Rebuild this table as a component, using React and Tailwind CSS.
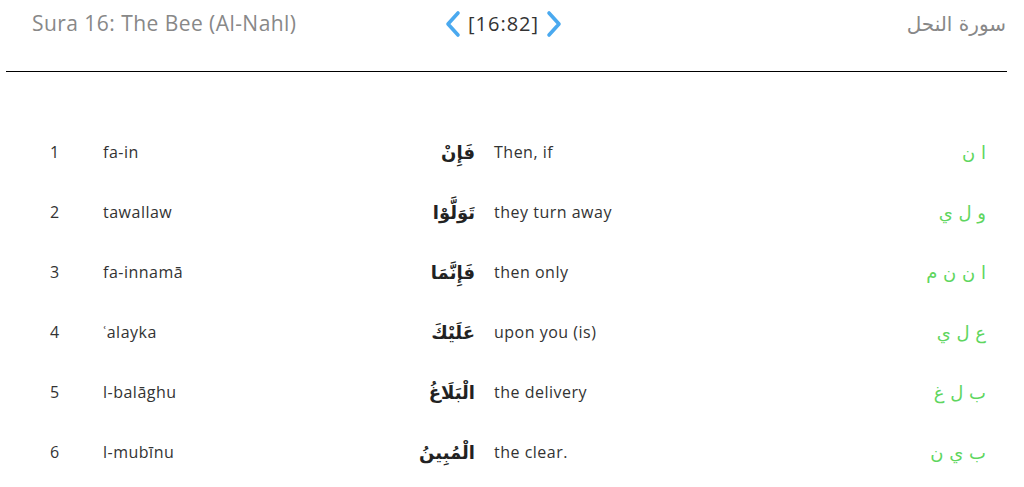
import React from "react";

const rows = [
  ["1", "fa-in", "فَإِنْ", "Then, if", "ا ن"],
  ["2", "tawallaw", "تَوَلَّوْا", "they turn away", "و ل ي"],
  ["3", "fa-innamā", "فَإِنَّمَا", "then only", "ا ن ن م"],
  ["4", "ʿalayka", "عَلَيْكَ", "upon you (is)", "ع ل ي"],
  ["5", "l-balāghu", "الْبَلَاغُ", "the delivery", "ب ل غ"],
  ["6", "l-mubīnu", "الْمُبِينُ", "the clear.", "ب ي ن"],
];

const Chevron = ({ dir }) => (
  <svg width="20" height="30" viewBox="0 0 20 30" fill="none">
    <path
      d={dir === "left" ? "M15 4 L5 15 L15 26" : "M5 4 L15 15 L5 26"}
      stroke="#4aa9ef"
      strokeWidth="3.6"
      strokeLinecap="round"
      strokeLinejoin="round"
    />
  </svg>
);

export default function App() {
  return (
    <div className="w-[1024px] h-[487px] bg-white overflow-hidden" style={{ fontFamily: "'Open Sans', Lato, sans-serif" }}>
      <div className="flex items-center h-[48px]">
        <div className="w-[443px] pl-[32px] text-[21px] text-[#888888] tracking-[0.45px]">Sura 16: The Bee (Al-Nahl)</div>
        <div className="flex items-center gap-[5px]">
          <Chevron dir="left" />
          <span className="text-[20px] text-[#333333] tracking-[1px]">[16:82]</span>
          <Chevron dir="right" />
        </div>
        <div className="flex-1 flex justify-end pr-[18px]">
          <span dir="rtl" className="text-[20px] text-[#888888]" style={{ fontFamily: "'DejaVu Sans', sans-serif" }}>سورة النحل</span>
        </div>
      </div>
      <div className="ml-[6px] mt-[23px] w-[1001px] border-t border-black" />
      <div className="mt-[50px]">
        {rows.map((r) => (
          <div key={r[0]} className="flex items-center h-[60px] text-[16px] text-[#333333] tracking-[0.5px]">
            <div className="w-[103px] pl-[50px]">{r[0]}</div>
            <div className="w-[260px]">{r[1]}</div>
            <div dir="rtl" className="w-[112px] text-right text-[18px] font-bold text-[#222222] tracking-normal" style={{ fontFamily: "'DejaVu Sans', sans-serif" }}>{r[2]}</div>
            <div className="w-[19px]" />
            <div className="flex-1">{r[3]}</div>
            <div dir="rtl" className="pr-[38px] text-[18px] text-[#5fd65f] tracking-normal" style={{ fontFamily: "'DejaVu Sans', sans-serif" }}>{r[4]}</div>
          </div>
        ))}
      </div>
    </div>
  );
}
